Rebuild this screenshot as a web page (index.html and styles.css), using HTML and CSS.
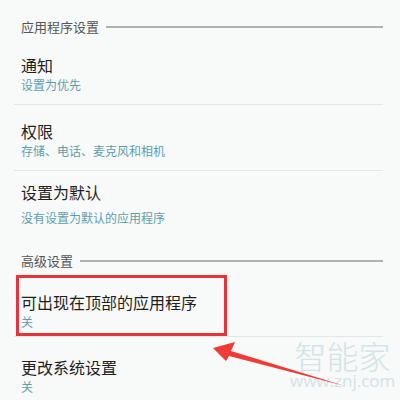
FILE: index.html
```html
<!DOCTYPE html>
<html>
<head>
<meta charset="utf-8">
<link rel="stylesheet" href="styles.css">
</head>
<body>
<div class="page">
  <div class="section-head first"><span class="section-title">应用程序设置</span><span class="rule"></span></div>
  <div class="item item-1">
    <div class="title">通知</div>
    <div class="sub">设置为优先</div>
  </div>
  <div class="item item-2">
    <div class="title">权限</div>
    <div class="sub">存储、电话、麦克风和相机</div>
  </div>
  <div class="item item-3">
    <div class="title">设置为默认</div>
    <div class="sub">没有设置为默认的应用程序</div>
  </div>
  <div class="section-head second"><span class="section-title">高级设置</span><span class="rule"></span></div>
  <div class="item item-4">
    <div class="title">可出现在顶部的应用程序</div>
    <div class="sub">关</div>
    <div class="highlight"></div>
  </div>
  <div class="item item-5">
    <div class="title">更改系统设置</div>
    <div class="sub">关</div>
  </div>

  <div class="watermark">
    <div class="wm-big">智能家</div>
    <div class="wm-small">www.znj.com</div>
  </div>
  <svg class="arrow" width="400" height="400" viewBox="0 0 400 400">
    <polygon points="213,348 235,342 231,351 345,386 229,356 226,361" fill="#ee3b35"/>
  </svg>
</div>
</body>
</html>
```
FILE: styles.css
```css
html, body {
  margin: 0;
  padding: 0;
  background: #f8f9f9;
}
.page {
  position: relative;
  width: 400px;
  height: 400px;
  overflow: hidden;
  font-family: "Noto Sans CJK SC", "Noto Sans", sans-serif;
  background: #f8f9f9;
}
.section-head {
  display: flex;
  align-items: center;
  padding: 0 17px 0 21px;
  height: 16px;
}
.section-head.first {
  margin-top: 19px;
}
.section-head.second {
  margin-top: 26px;
}
.section-title {
  font-size: 13px;
  line-height: 16px;
  color: #555;
  white-space: nowrap;
}
.rule {
  flex: 1;
  height: 2px;
  background: #b0b0b0;
  margin-left: 7px;
}
.item {
  position: relative;
  margin-left: 14px;
  margin-right: 17px;
  padding-left: 7px;
  border-bottom: 1px solid #e4e6e6;
}
.title {
  font-size: 16px;
  line-height: 22px;
  color: #1e1e1e;
}
.sub {
  font-size: 12px;
  line-height: 18px;
  color: #5c9fac;
}
.item-1 { padding-top: 19px; padding-bottom: 10px; }
.item-2 { padding-top: 15px; padding-bottom: 10px; }
.item-3 { padding-top: 10px; padding-bottom: 0; border-bottom: none; }
.item-3 .title { margin-bottom: 6px; }
.item-4 { margin-top: 6px; padding-top: 16px; padding-bottom: 5px; }
.item-5 { padding-top: 19px; border-bottom: none; }
.highlight {
  position: absolute;
  left: 2px;
  top: 0;
  width: 205px;
  height: 55px;
  border: 3px solid #e8333a;
}
.watermark {
  position: absolute;
  left: 290px;
  top: 338px;
  color: #d3e3e6;
  text-align: center;
}
.wm-big {
  font-size: 32px;
  line-height: 34px;
  font-weight: 300;
}
.wm-small {
  font-family: "Open Sans", "Noto Sans", sans-serif;
  font-size: 17px;
  line-height: 18px;
}
.arrow {
  position: absolute;
  left: 0;
  top: 0;
}
```
